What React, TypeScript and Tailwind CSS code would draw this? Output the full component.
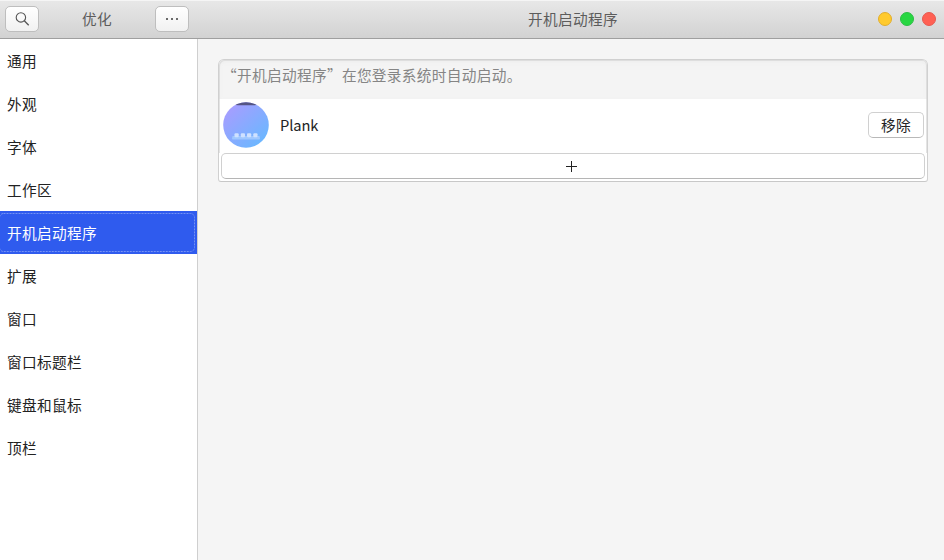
const categories = ['通用', '外观', '字体', '工作区', '开机启动程序', '扩展', '窗口', '窗口标题栏', '键盘和鼠标', '顶栏'];
const activeCategory = '开机启动程序';

function HeaderBar() {
  return (
    <header className="flex h-[39px] shrink-0 border-b border-[#9f9f9f] bg-linear-to-b from-[#e8e8e8] to-[#d2d2d2] text-[#5c5c5c] shadow-[inset_0_1px_0_#f5f5f5]">
      <div className="flex w-[194px] items-center justify-between pl-[5px] pr-[5px]">
        <button aria-label="搜索" className="flex h-[26px] w-[34px] items-center justify-center rounded-[5px] border border-[#bebebe] bg-linear-to-b from-white to-[#f1f1f1]">
          <svg width="16" height="16" viewBox="0 0 16 16" fill="none" stroke="#555" strokeWidth="1.1">
            <circle cx="6.9" cy="6.4" r="4.7" />
            <path d="M10.3 9.8 14.7 14.2" strokeWidth="1.3" />
          </svg>
        </button>
        <h1>优化</h1>
        <button aria-label="菜单" className="flex h-[26px] w-[34px] items-center justify-center gap-[3px] rounded-[5px] border border-[#bebebe] bg-linear-to-b from-white to-[#f1f1f1] pb-px">
          <span className="size-[2px] bg-[#6b6b6b]" />
          <span className="size-[2px] bg-[#6b6b6b]" />
          <span className="size-[2px] bg-[#6b6b6b]" />
        </button>
      </div>
      <div className="flex flex-1 items-center justify-end">
        <h2 className="mr-[260px]">开机启动程序</h2>
        <div className="mr-2 flex gap-2">
          <span className="size-[14px] rounded-full border border-[#e2ae2c] bg-[#ffca2d]" />
          <span className="size-[14px] rounded-full border border-[#2dbd45] bg-[#28d742]" />
          <span className="size-[14px] rounded-full border border-[#e6594f] bg-[#ff6053]" />
        </div>
      </div>
    </header>
  );
}

function Sidebar() {
  return (
    <nav className="w-[198px] shrink-0 border-r border-[#cfcfcf] bg-white">
      {categories.map((name) => (
        <div
          key={name}
          className={
            name === activeCategory
              ? 'relative flex h-[43px] items-center bg-[#2f5bee] pl-[7px] text-white'
              : 'flex h-[43px] items-center pl-[7px]'
          }
        >
          {name}
          {name === activeCategory && (
            <svg className="absolute left-0 top-0" width="197" height="43" fill="none" stroke="#7592f4" strokeDasharray="2 1">
              <rect x="-.5" y="2.5" width="195" height="38" rx="4" />
            </svg>
          )}
        </div>
      ))}
    </nav>
  );
}

function PlankIcon() {
  return (
    <svg width="46" height="46" viewBox="0 0 46 46" className="shrink-0">
      <defs>
        <linearGradient id="plank" x1="5" y1="5" x2="39" y2="41" gradientUnits="userSpaceOnUse">
          <stop stopColor="#a79dff" />
          <stop offset="1" stopColor="#6bb7ff" />
        </linearGradient>
        <clipPath id="disc"><circle cx="23" cy="23" r="22.8" /></clipPath>
      </defs>
      <g clipPath="url(#disc)">
        <rect width="46" height="46" fill="url(#plank)" />
        <path d="M11 0H35V2Q34 3.2 31 3.2H15Q12 3.2 11 2Z" fill="#555583" />
      </g>
      <path d="M9.5 34H36.5L37 36.5 36.5 37.5H9.5L9 36.5Z" fill="#a0c8ff" />
      <g fill="#cfe1ff">
        <rect x="11.5" y="31.3" width="4.2" height="4" rx="1" />
        <rect x="17.8" y="31.3" width="4.2" height="4" rx="1" />
        <rect x="24" y="31.3" width="4.2" height="4" rx="1" />
        <rect x="30.3" y="31.3" width="4.2" height="4" rx="1" />
      </g>
    </svg>
  );
}

function StartupPanel() {
  return (
    <section className="h-[123px] w-[710px] rounded-t-[6px] rounded-b-[3px] border border-[#d0d0d0] border-b-[#c8c8c8] bg-white">
      <p className="h-[39px] rounded-t-[5px] bg-[#f4f4f4] pl-[3px] pt-[4px] leading-[22px] text-[#858585] shadow-[inset_1px_1px_0_#dedede,inset_-1px_0_0_#dedede,inset_0_2px_4px_#ededed]">
        “开机启动程序”在您登录系统时自动启动。
      </p>
      <div className="flex h-[54px] items-center pl-1 pr-[3px] pb-[2px] shadow-[inset_1px_0_0_#e4e4e4,inset_-1px_0_0_#e4e4e4]">
        <PlankIcon />
        <span className="ml-[11px] flex-1 tracking-[-0.1px]">Plank</span>
        <button className="h-[26px] w-[56px] rounded-[5px] border border-[#d0d0d0] border-b-[#b8b8b8] bg-white">移除</button>
      </div>
      <button aria-label="添加" className="ml-[2px] flex h-[26px] w-[704px] items-center justify-center rounded-[5px] border border-[#d0d0d0] border-b-[#b5b5b5] bg-white pr-[3px]">
        <svg width="11" height="11" viewBox="0 0 11 11" fill="#222">
          <rect x="5" width="1" height="11" />
          <rect y="5" width="11" height="1" />
        </svg>
      </button>
    </section>
  );
}

export default function App() {
  return (
    <div className="flex h-[560px] w-[944px] flex-col overflow-hidden bg-[#f5f5f5] font-['Noto_Sans_CJK_SC',sans-serif] text-[14.67px] leading-[22px] tracking-[0.33px] text-[#222]">
      <HeaderBar />
      <div className="flex min-h-0 flex-1">
        <Sidebar />
        <main className="flex-1 pl-5 pt-5"><StartupPanel /></main>
      </div>
    </div>
  );
}
